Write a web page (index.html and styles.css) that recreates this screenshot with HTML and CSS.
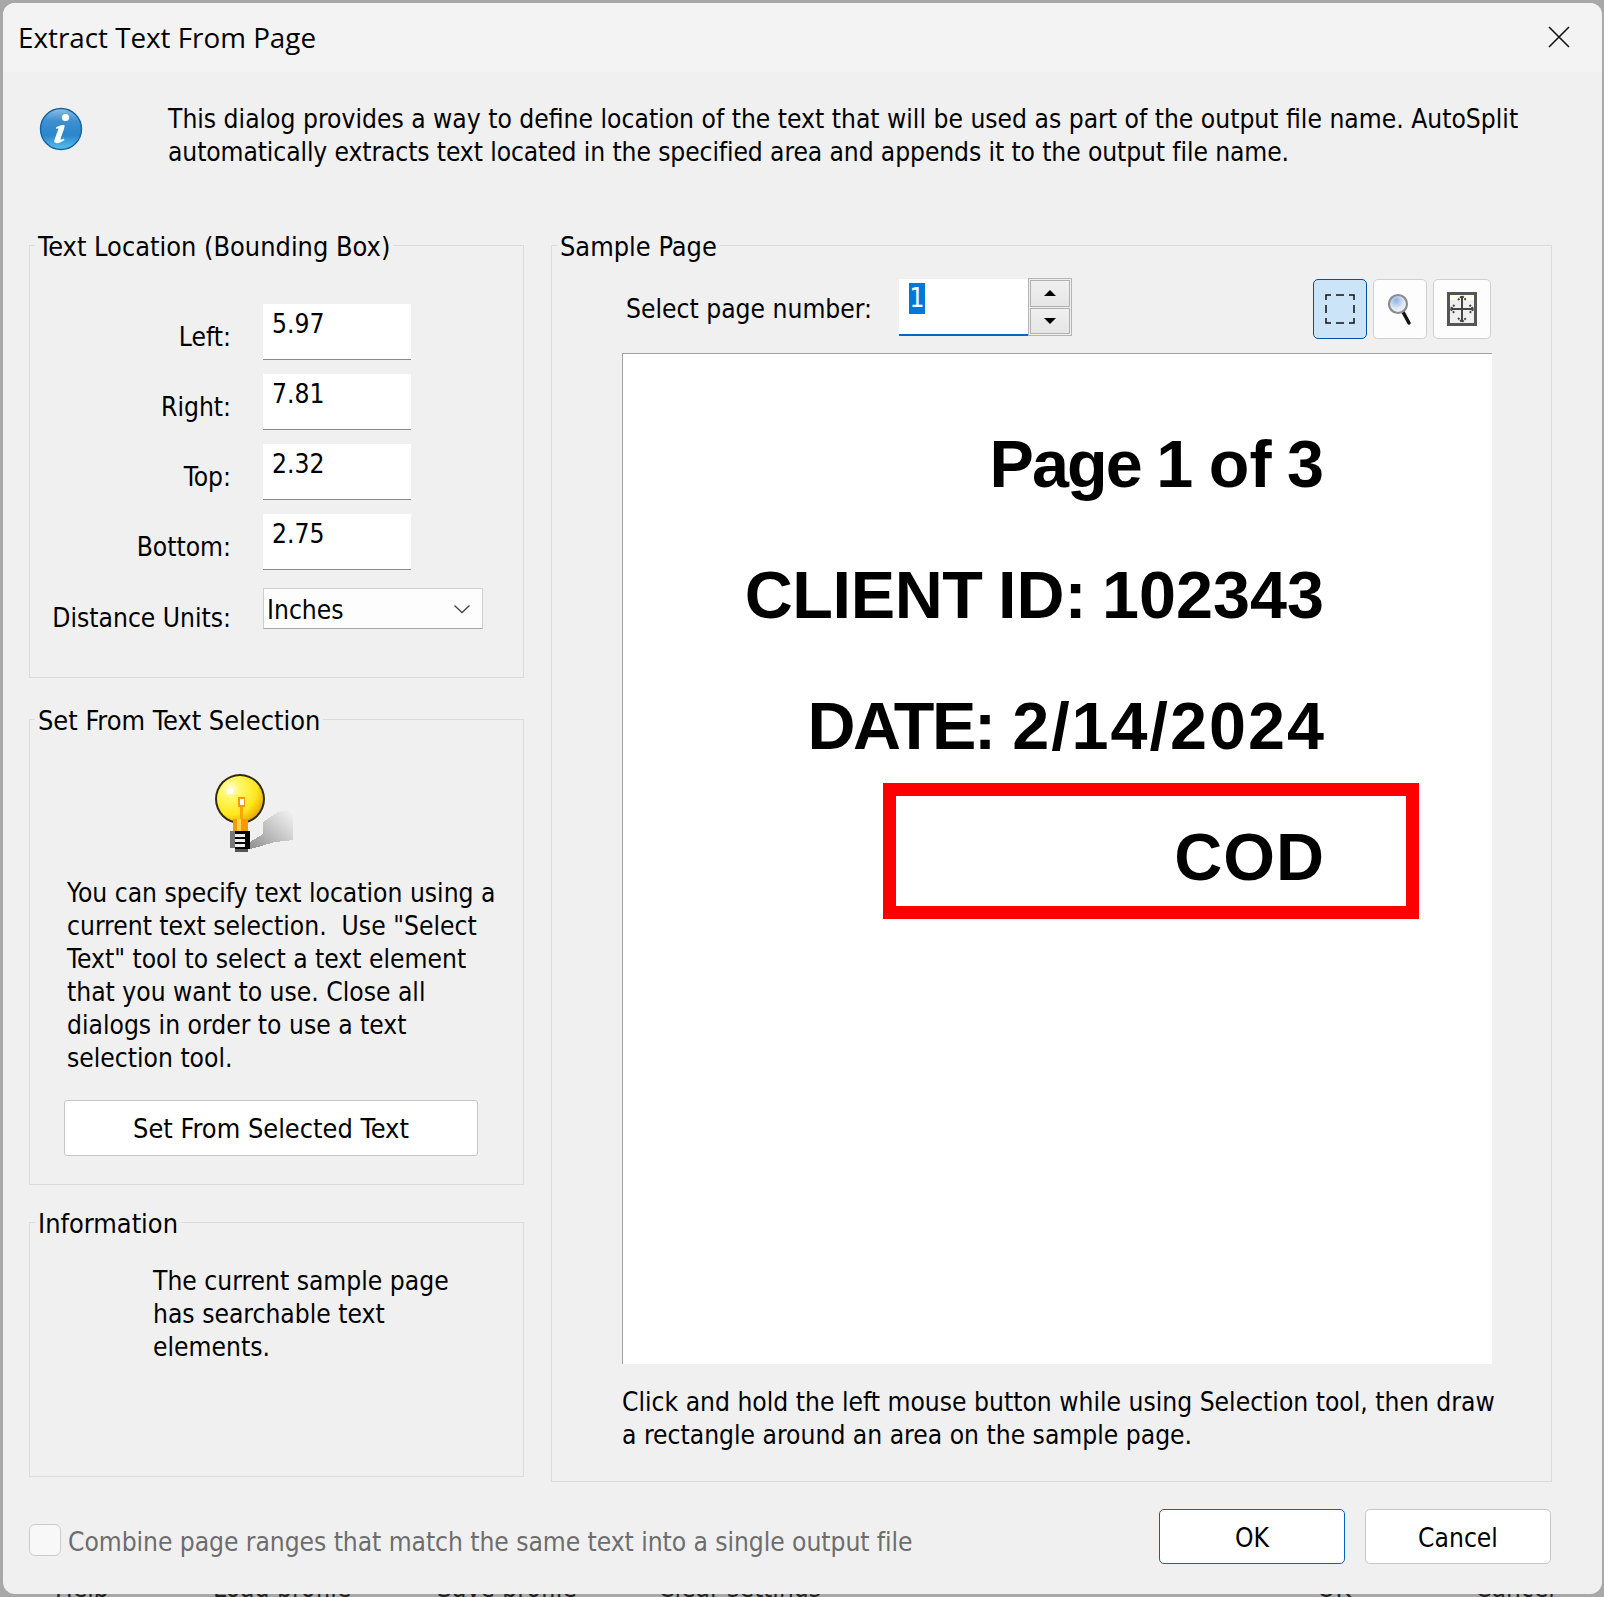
FILE: index.html
```html
<!DOCTYPE html>
<html lang="en">
<head>
<meta charset="utf-8">
<title>Extract Text From Page</title>
<link rel="stylesheet" href="styles.css">
</head>
<body>
<div class="frame">
  <div class="window">
    <header class="titlebar">
      <span class="title">Extract Text From Page</span>
      <svg class="close" width="22" height="22" viewBox="0 0 22 22"><path d="M1 1L21 21M21 1L1 21" stroke="#111" stroke-width="1.6" fill="none"/></svg>
    </header>
    <div class="intro">
      <svg class="info-icon" width="44" height="44" viewBox="0 0 44 44">
        <defs>
          <linearGradient id="ib" x1="0" y1="0" x2="0" y2="1"><stop offset="0" stop-color="#8fbfe4"/><stop offset=".3" stop-color="#3f8fd0"/><stop offset=".65" stop-color="#2a86cc"/><stop offset="1" stop-color="#5cc0ee"/></linearGradient>
        </defs>
        <circle cx="22" cy="22" r="20.5" fill="url(#ib)" stroke="#14659f" stroke-width="1.4"/>
        <circle cx="26.5" cy="10.5" r="3.6" fill="#fff"/>
        <path d="M17 20.5c3-2 6.5-3 8-2.4 1 .5.6 2-.2 4.3l-3.200 9c-.5 1.500.4 1.600 3.300 0l.5 1.600c-3.300 2.800-9.400 4.400-10 2-.3-1 .1-2.400.8-4.300l3-8.300c.5-1.600-.2-1.600-2 -.4z" fill="#fff"/>
      </svg>
      <p class="intro-text">This dialog provides a way to define location of the text that will be used as part of the output file name. AutoSplit<br><span class="tighter">automatically extracts text located in the specified area and appends it to the output file name.</span></p>
    </div>

    <main class="columns">
      <div class="left">
        <fieldset class="group group-location">
          <legend>Text Location (Bounding Box)</legend>
          <div class="form">
            <div class="row"><span class="label">Left:</span><div class="field">5.97</div></div>
            <div class="row"><span class="label">Right:</span><div class="field">7.81</div></div>
            <div class="row"><span class="label">Top:</span><div class="field">2.32</div></div>
            <div class="row"><span class="label">Bottom:</span><div class="field">2.75</div></div>
            <div class="row row-units"><span class="label">Distance Units:</span>
              <div class="select">Inches
                <svg width="18" height="10" viewBox="0 0 18 10"><path d="M1.500 1.500L9 8.500L16.500 1.500" stroke="#444" stroke-width="1.300" fill="none"/></svg>
              </div>
            </div>
          </div>
        </fieldset>

        <fieldset class="group group-selection">
          <legend>Set From Text Selection</legend>
          <svg class="bulb" width="84" height="82" viewBox="0 0 84 82" shape-rendering="crispEdges">
            <defs>
              <radialGradient id="bg" cx=".3" cy=".28" r=".8"><stop offset="0" stop-color="#fffde0"/><stop offset=".25" stop-color="#fff86a"/><stop offset=".7" stop-color="#ffe81e"/><stop offset="1" stop-color="#e8a800"/></radialGradient>
              <linearGradient id="sh" x1="0" y1="1" x2="1" y2="0"><stop offset="0" stop-color="#8f8f8f"/><stop offset=".6" stop-color="#cfcfcf"/><stop offset="1" stop-color="#f6f6f6"/></linearGradient>
            </defs>
            <path d="M80 37V68L62 70L45 75L37 77V70L50 62V50L65 40z" fill="url(#sh)"/>
            <circle cx="27" cy="27" r="25" fill="#2e2a18" shape-rendering="auto"/>
            <circle cx="27" cy="27" r="23" fill="url(#bg)" shape-rendering="auto"/>
            <rect x="20" y="47" width="15" height="12" fill="#f79a00"/>
            <rect x="24" y="47" width="4" height="12" fill="#ffd24a"/>
            <rect x="27" y="35" width="3" height="12" fill="#f7a800"/>
            <rect x="25" y="25" width="7" height="10" fill="#f79a00"/>
            <rect x="27" y="27" width="4" height="6" fill="#fff"/>
            <rect x="14" y="17" width="6" height="5" fill="#fff"/>
            <rect x="17" y="59" width="5" height="17" fill="#777"/>
            <rect x="22" y="59" width="15" height="18" fill="#000"/>
            <rect x="22" y="62" width="10" height="2.500" fill="#eee"/>
            <rect x="22" y="67" width="10" height="2.500" fill="#eee"/>
            <rect x="22" y="72" width="10" height="2.500" fill="#eee"/>
            <rect x="22" y="77" width="13" height="3" fill="#555"/>
          </svg>
          <p class="help-text">You can specify text location using a<br>current text selection.&nbsp; Use "Select<br>Text" tool to select a text element<br>that you want to use. Close all<br>dialogs in order to use a text<br>selection tool.</p>
          <button class="btn btn-set">Set From Selected Text</button>
        </fieldset>

        <fieldset class="group group-info">
          <legend>Information</legend>
          <p class="info-text">The current sample page<br>has searchable text<br>elements.</p>
        </fieldset>
      </div>

      <fieldset class="group group-sample">
        <legend>Sample Page</legend>
        <div class="sample-bar">
          <span class="page-label">Select page number:</span>
          <div class="spin-field"><span class="selected">1</span></div>
          <div class="spinner">
            <div class="spin-btn"><svg width="12" height="6" viewBox="0 0 12 6"><path d="M6 0L12 6H0z" fill="#000"/></svg></div>
            <div class="spin-btn"><svg width="12" height="6" viewBox="0 0 12 6"><path d="M0 0H12L6 6z" fill="#000"/></svg></div>
          </div>
          <div class="tools">
            <div class="tool tool-active">
              <svg width="30" height="30" viewBox="0 0 30 30"><path d="M1 6V1H6M11 1H19M24 1H29V6M29 11V19M29 24V29H24M19 29H11M6 29H1V24M1 19V11" stroke="#111" stroke-width="1.500" fill="none"/></svg>
            </div>
            <div class="tool">
              <svg width="28" height="34" viewBox="0 0 28 34">
                <defs><radialGradient id="lens" cx=".4" cy=".3" r=".8"><stop offset="0" stop-color="#8fb0e6"/><stop offset=".55" stop-color="#dfe8f6"/><stop offset="1" stop-color="#f6f6f6"/></radialGradient></defs>
                <path d="M17 20L23 31" stroke="#111" stroke-width="3.500" stroke-linecap="round"/>
                <circle cx="12" cy="12" r="9" fill="url(#lens)" stroke="#8c8c8c" stroke-width="2.200"/>
              </svg>
            </div>
            <div class="tool tool-wide">
              <svg width="30" height="34" viewBox="0 0 30 34">
                <rect x="1.500" y="1.500" width="27" height="31" fill="#efefef" stroke="#555" stroke-width="3"/>
                <rect x="3" y="3" width="24" height="5" fill="#fdfde8"/>
                <path d="M15 4V30M3.500 17H26.500" stroke="#444" stroke-width="2"/>
                <path d="M11 8L15 4L19 8M11 26L15 30L19 26M7.500 13L3.500 17L7.500 21M22.500 13L26.500 17L22.500 21" stroke="#444" stroke-width="2" fill="none" stroke-dasharray="2 1"/>
              </svg>
            </div>
          </div>
        </div>
        <div class="canvas">
          <div class="page-lines">
            <div class="line-gap"><span class="sq-page">Page</span> 1 of 3</div>
            <div class="line-gap"><span class="sq-client">CLIENT</span> ID: 102343</div>
            <div><span class="sq-date">DATE:</span> <span class="wide">2/14/2024</span></div>
            <div class="cod">COD</div>
          </div>
          <div class="red-box"></div>
        </div>
        <p class="caption">Click and hold the left mouse button while using Selection tool, then draw<br>a rectangle around an area on the sample page.</p>
      </fieldset>
    </main>

    <footer class="footer">
      <span class="checkbox"></span>
      <span class="check-label">Combine page ranges that match the same text into a single output file</span>
      <button class="btn btn-ok">OK</button>
      <button class="btn btn-cancel">Cancel</button>
    </footer>
  </div>
</div>
<div class="behind">
  <span>Help</span><span>Load profile</span><span>Save profile</span><span>Clear settings</span><span>OK</span><span>Cancel</span>
</div>
</body>
</html>
```

FILE: styles.css
```css
* { box-sizing: border-box; }
html, body { margin: 0; padding: 0; }
body {
  width: 1604px;
  height: 1597px;
  overflow: hidden;
  background: #a8a8a8;
  font-family: "DejaVu Sans", sans-serif;
  font-stretch: condensed;
  font-size: 26.2px;
  line-height: 33px;
  color: #000;
}
p { margin: 0; }

.frame {
  height: 1594px;
  padding: 3px 2px 0 3px;
}
.window {
  height: 100%;
  background: #f0f0f0;
  border-radius: 12px;
  overflow: hidden;
}

.titlebar {
  height: 69px;
  background: #f3f3f3;
  display: flex;
  align-items: center;
  justify-content: space-between;
  padding: 0 32px 0 15px;
}
.title {
  font-family: "Open Sans", sans-serif;
  font-stretch: normal;
  font-size: 27.8px;
}
.close { display: block; margin-top: -2px; }

.intro {
  display: flex;
  height: 157px;
  padding: 31px 0 0 36px;
}
.info-icon { flex: none; margin: 4px 0 0 0; }
.intro-text { margin-left: 85px; white-space: nowrap; }
.tighter { letter-spacing: -.11px; }

.columns {
  display: flex;
  align-items: flex-start;
  gap: 27px;
  padding-left: 26px;
}
.left { width: 495px; display: flex; flex-direction: column; }

.group {
  margin: 0;
  padding: 0;
  border: 1.500px solid #dcdcdc;
  min-width: 0;
}
.group legend { margin-left: 5px; padding: 0 3px; font-size: 26.9px; line-height: 35px; height: 33px; }

.group-location { height: 449px; margin-bottom: 25px; }
.group-selection { height: 482px; margin-bottom: 21px; }
.group-info { height: 271px; }
.group-sample { width: 1001px; height: 1253px; }

.form { padding-top: 42px; }
.row { display: flex; height: 70px; }
.label { width: 201px; text-align: right; padding-top: 17px; white-space: nowrap; }
.field {
  width: 148px;
  height: 56px;
  margin-left: 32px;
  background: #fff;
  border-bottom: 1.500px solid #8a8a8a;
  padding: 4px 0 0 9px;
}
.row-units { margin-top: 4px; }
.select {
  position: relative;
  width: 220px;
  height: 41px;
  margin-left: 32px;
  background: #fdfdfd;
  border: 1px solid #cfcfcf;
  border-bottom-color: #a8a8a8;
  padding: 5px 0 0 3px;
}
.select svg { position: absolute; right: 11px; top: 15px; }
.row-units .label { padding-top: 14px; }

.bulb { display: block; margin: 36px 0 0 183px; }
.help-text { margin: 23px 0 0 37px; white-space: nowrap; }
.btn {
  font: inherit;
  color: #000;
  background: #fff;
  border: 1px solid #c6c6c6;
  border-radius: 5px;
  padding: 0;
}
.btn-set { display: block; width: 414px; height: 56px; margin: 25px 0 0 34px; font-size: 26.9px; border-radius: 3px; }

.info-text { margin: 26px 0 0 123px; white-space: nowrap; }

.sample-bar { display: flex; align-items: flex-start; height: 91px; }
.page-label { margin: 31px 0 0 74px; width: 273px; white-space: nowrap; }
.spin-field {
  width: 129px;
  height: 57px;
  margin-top: 17px;
  background: #fff;
  border-bottom: 2px solid #0067c0;
  padding: 3px 0 0 10px;
}
.selected { display: inline-block; width: 16px; height: 31px; line-height: 30px; background: #0078d7; color: #fff; text-align: center; }
.spinner {
  width: 44px;
  height: 58px;
  margin-top: 16px;
  border: 1px solid #b4b4b4;
  padding: 1px;
  display: flex;
  flex-direction: column;
  gap: 1px;
  background: #efefef;
}
.spin-btn {
  flex: 1;
  border: 1px solid #b0b0b0;
  background: linear-gradient(#f0f0f0, #e5e5e5);
  display: flex;
  align-items: center;
  justify-content: center;
}
.tools { display: flex; gap: 6px; margin: 17px 0 0 241px; }
.tool {
  width: 54px;
  height: 60px;
  background: #fdfdfd;
  border: 1px solid #cfcfcf;
  border-radius: 5px;
  display: flex;
  align-items: center;
  justify-content: center;
}
.tool-active { background: #cce4f7; border-color: #005499; }
.tool-wide { width: 58px; }

.canvas {
  position: relative;
  width: 870px;
  height: 1011px;
  margin-left: 70px;
  background: #fff;
  border-top: 1.500px solid #a0a0a0;
  border-left: 1.500px solid #a0a0a0;
  overflow: hidden;
}
.page-lines {
  padding: 45px 168px 0 0;
  text-align: right;
  font-family: "Liberation Sans", Arial, sans-serif;
  font-stretch: normal;
  font-weight: 700;
  font-size: 66.500px;
  line-height: 131px;
}
.line-gap { word-spacing: -3px; }
.sq-page { letter-spacing: -1.900px; }
.sq-client { letter-spacing: -.400px; }
.sq-date { letter-spacing: -2.400px; }
.wide { letter-spacing: 2px; margin-right: -2px; }
.cod { letter-spacing: 1px; margin-right: -1px; }
.red-box {
  position: absolute;
  left: 260px;
  top: 429px;
  width: 536px;
  height: 136px;
  border: 13px solid #f00;
}
.caption { margin: 22px 0 0 70px; white-space: nowrap; }

.footer {
  display: flex;
  align-items: flex-start;
  height: 56px;
  margin-top: 27px;
  padding: 0 51px 0 26px;
}
.checkbox {
  width: 32px;
  height: 32px;
  margin-top: 15px;
  background: #f8f8f8;
  border: 1.500px solid #cbcbcb;
  border-radius: 6px;
}
.check-label { margin: 17px 0 0 7px; color: #6d6d6d; white-space: nowrap; flex: 1; letter-spacing: -.06px; }
.btn-ok, .btn-cancel { width: 186px; height: 55px; padding-top: 3px; }
.btn-ok { border-color: #0067c0; margin-right: 20px; }

.behind {
  height: 3px;
  overflow: hidden;
  display: grid;
  grid-template-columns: 158px 224px 221px 659px 158px 1fr;
  padding-left: 55px;
  color: #222;
}
.behind span { display: block; margin-top: -22px; white-space: nowrap; }
```
